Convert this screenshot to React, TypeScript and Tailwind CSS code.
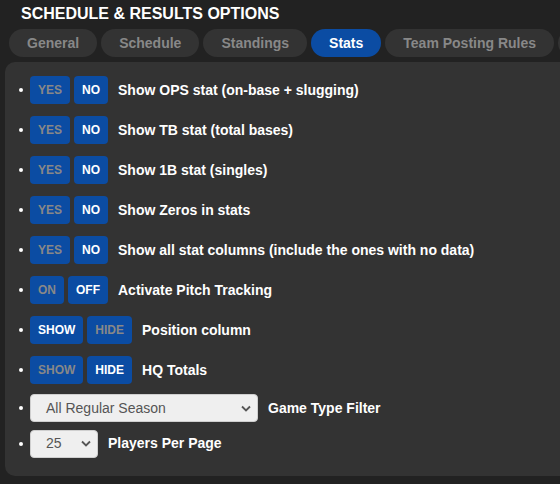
import React from "react";

type Toggle = { options: [string, string]; active: 0 | 1; label: string };

const rows: Toggle[] = [
  { options: ["YES", "NO"], active: 1, label: "Show OPS stat (on-base + slugging)" },
  { options: ["YES", "NO"], active: 1, label: "Show TB stat (total bases)" },
  { options: ["YES", "NO"], active: 1, label: "Show 1B stat (singles)" },
  { options: ["YES", "NO"], active: 1, label: "Show Zeros in stats" },
  { options: ["YES", "NO"], active: 1, label: "Show all stat columns (include the ones with no data)" },
  { options: ["ON", "OFF"], active: 1, label: "Activate Pitch Tracking" },
  { options: ["SHOW", "HIDE"], active: 0, label: "Position column" },
  { options: ["SHOW", "HIDE"], active: 1, label: "HQ Totals" },
];

const tabs = ["General", "Schedule", "Standings", "Stats", "Team Posting Rules"];

const Bullet = () => <span className="w-[4px] h-[4px] rounded-full bg-white shrink-0 mr-[7px] ml-[14px]" />;

const Chevron = () => (
  <svg width="10" height="7" viewBox="0 0 10 7" className="shrink-0">
    <path d="M1 1.5 L5 5.5 L9 1.5" fill="none" stroke="#555" strokeWidth="1.8" />
  </svg>
);

const Select = ({ value, width }: { value: string; width: string }) => (
  <div className={`${width} h-[28px] flex items-center justify-between pl-[15px] pr-[6px] bg-[#efefef] border border-[#cfcfcf] rounded-[4px] text-[14px] text-[#555]`}>
    <span>{value}</span>
    <Chevron />
  </div>
);

export default function App() {
  return (
    <div className="w-[560px] h-[484px] bg-[#222] overflow-hidden font-['Liberation_Sans',Arial,sans-serif]">
      <h1 className="pl-[21px] pt-[5px] h-[29px] text-[16px] font-bold text-white leading-[18px]">
        SCHEDULE &amp; RESULTS OPTIONS
      </h1>
      <div className="flex gap-[4px] pl-[9px] h-[28px] whitespace-nowrap">
        {tabs.map((t) => (
          <div
            key={t}
            className={`shrink-0 h-[28px] px-[18px] rounded-full flex items-center text-[14px] font-bold ${
              t === "Stats" ? "bg-[#0b4ca3] text-white px-[17px]" : "bg-[#333] text-[#888]"
            }`}
          >
            {t}
          </div>
        ))}
        {/* next tab, cut off by the window edge */}
        <div className="shrink-0 h-[28px] w-[80px] rounded-full bg-[#333]" />
      </div>
      <div className="mt-[5px] ml-[5px] w-[600px] h-[414px] bg-[#333] rounded-[10px] pt-[14px]">
        <ul className="flex flex-col gap-[12px]">
          {rows.map((r) => (
            <li key={r.label} className="flex items-center h-[28px]">
              <Bullet />
              <div className="flex gap-[4px]">
                {r.options.map((o, i) => (
                  <span
                    key={o}
                    className={`h-[28px] px-[8px] flex items-center rounded-[4px] bg-[#0b4ca3] text-[12px] font-bold ${
                      i === r.active ? "text-white" : "text-[#888]"
                    }`}
                  >
                    {o}
                  </span>
                ))}
              </div>
              <span className="ml-[10px] text-[14px] font-bold text-white">{r.label}</span>
            </li>
          ))}
          <li className="flex items-center h-[28px] -mt-[2px]">
            <Bullet />
            <Select value="All Regular Season" width="w-[228px]" />
            <span className="ml-[10px] text-[14px] font-bold text-white">Game Type Filter</span>
          </li>
          <li className="flex items-center h-[27px] -mt-[4px]">
            <Bullet />
            <Select value="25" width="w-[68px]" />
            <span className="ml-[10px] text-[14px] font-bold text-white">Players Per Page</span>
          </li>
        </ul>
      </div>
    </div>
  );
}
